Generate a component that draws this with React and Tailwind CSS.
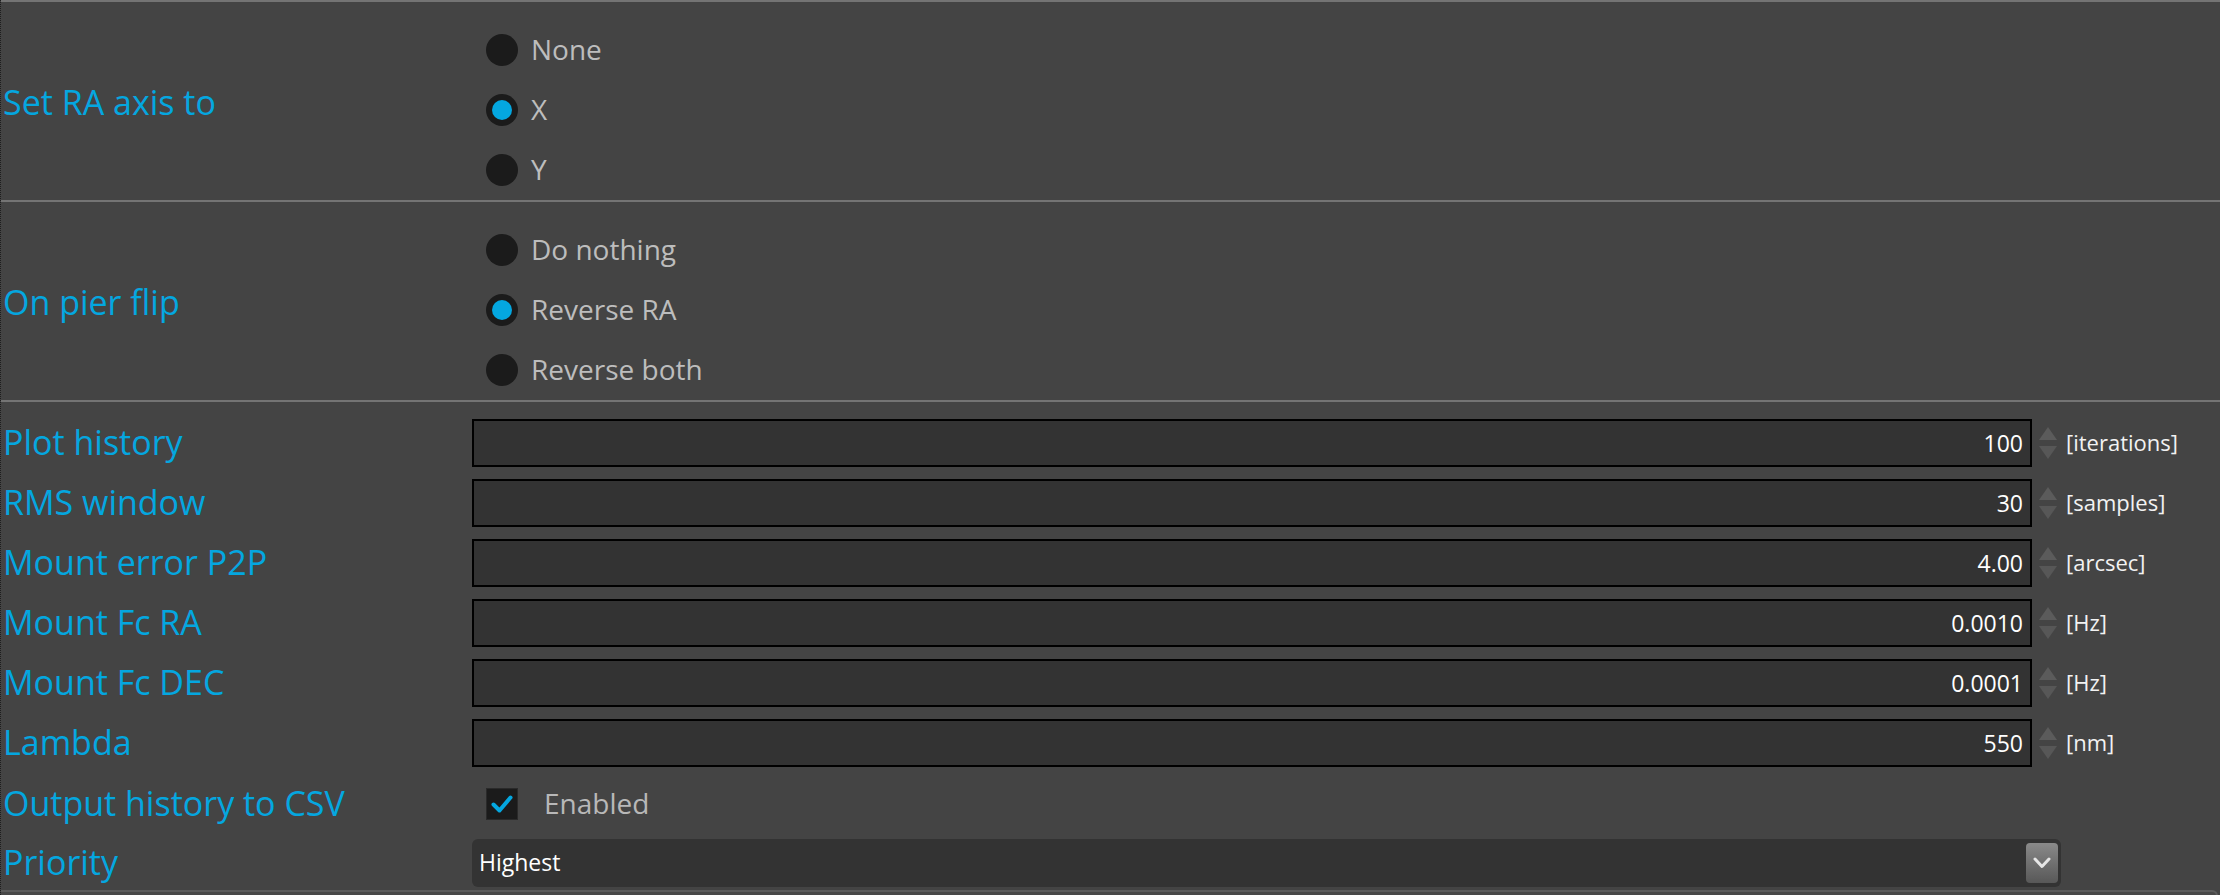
const font = "font-['Open_Sans',sans-serif]";

function Radio({ label, checked }) {
    return (
        <div className="h-[60px] flex items-center">
            <span className="ml-[14px] w-8 h-8 rounded-full bg-[#1b1b1b] flex items-center justify-center flex-shrink-0">
                {checked && <span className="w-5 h-5 rounded-full bg-[#04a7e0]" />}
            </span>
            <span className="ml-[13px] text-[28px] text-[#bdbdbd] leading-none pb-[2px]">{label}</span>
        </div>
    );
}

function RadioSection({ label, options, selected }) {
    return (
        <div className="h-[198px] flex-shrink-0 flex items-center">
            <div className="w-[471px] pl-[2px] text-[34px] text-[#04a7e0] leading-none pt-[2px]">{label}</div>
            <div className="flex flex-col self-end">
                {options.map((o) => (
                    <Radio key={o} label={o} checked={o === selected} />
                ))}
            </div>
        </div>
    );
}

function Spinner() {
    return (
        <div className="w-8 h-[48px] flex flex-col items-center justify-center gap-[6px]">
            <svg width="18" height="13" viewBox="0 0 18 13">
                <path d="M9 0 L18 13 L0 13 Z" fill="#5b5b5b" />
            </svg>
            <svg width="18" height="13" viewBox="0 0 18 13">
                <path d="M0 0 L18 0 L9 13 Z" fill="#575757" />
            </svg>
        </div>
    );
}

function NumberRow({ label, value, unit }) {
    return (
        <div className="h-[60px] flex items-center">
            <div className="w-[471px] pl-[2px] text-[34px] text-[#04a7e0] leading-none pb-[2px]">{label}</div>
            <div className="w-[1560px] h-[48px] bg-[#333333] border-2 border-black flex items-center justify-end pr-[7px] text-[23px] text-white">
                {value}
            </div>
            <Spinner />
            <span className="ml-[2px] text-[22px] text-[#f2f2f2] leading-none pb-[3px]">{unit}</span>
        </div>
    );
}

export default function App() {
    const rows = [
        ["Plot history", "100", "[iterations]"],
        ["RMS window", "30", "[samples]"],
        ["Mount error P2P", "4.00", "[arcsec]"],
        ["Mount Fc RA", "0.0010", "[Hz]"],
        ["Mount Fc DEC", "0.0001", "[Hz]"],
        ["Lambda", "550", "[nm]"],
    ];
    return (
        <div className={`${font} w-full h-[895px] bg-[#444444] overflow-hidden border-l border-dotted border-[#1e1e1e] flex flex-col`}>
            <div className="h-[2px] bg-[#747474] flex-shrink-0" />
            <RadioSection label="Set RA axis to" options={["None", "X", "Y"]} selected="X" />
            <div className="h-[2px] bg-[#747474] flex-shrink-0" />
            <RadioSection label="On pier flip" options={["Do nothing", "Reverse RA", "Reverse both"]} selected="Reverse RA" />
            <div className="h-[2px] bg-[#747474] flex-shrink-0" />

            <div className="pt-[11px] flex flex-col flex-shrink-0">
                {rows.map(([l, v, u]) => (
                    <NumberRow key={l} label={l} value={v} unit={u} />
                ))}

                <div className="h-[62px] flex items-center">
                    <div className="w-[471px] pl-[2px] text-[34px] text-[#04a7e0] leading-none pb-[2px]">Output history to CSV</div>
                    <span className="ml-[14px] w-8 h-8 bg-[#1b1b1b] border border-[#2a2a2a] flex items-center justify-center">
                        <svg width="22" height="20" viewBox="0 0 22 20">
                            <path d="M2.5 10.5 L8.5 16.5 L19.5 3.5" fill="none" stroke="#04a7e0" strokeWidth="4" strokeLinecap="round" strokeLinejoin="round" />
                        </svg>
                    </span>
                    <span className="ml-[26px] text-[28px] text-[#b8b8b8] leading-none pb-[2px]">Enabled</span>
                </div>

                <div className="h-[54px] flex items-start pt-[4px]">
                    <div className="w-[471px] h-[48px] flex items-center pl-[2px] text-[34px] text-[#04a7e0] leading-none pb-[2px]">Priority</div>
                    <div className="w-[1589px] h-[48px] rounded-md bg-[#333333] flex items-center justify-between pl-[7px] pr-[3px]">
                        <span className="text-[23px] text-white leading-none pb-[2px]">Highest</span>
                        <span className="w-8 h-10 rounded bg-gradient-to-b from-[#8a8a8a] to-[#585858] flex items-center justify-center">
                            <svg width="18" height="12" viewBox="0 0 18 12">
                                <path d="M2 2 L9 9.5 L16 2" fill="none" stroke="#e6e6e6" strokeWidth="3" strokeLinecap="round" strokeLinejoin="round" />
                            </svg>
                        </span>
                    </div>
                </div>
            </div>

            <div className="h-[20px] flex-shrink-0 mt-[1px] mr-[2px] border-t-2 border-r-2 border-[#5c5c5c] rounded-tr-md bg-[#484848]" />
        </div>
    );
}
